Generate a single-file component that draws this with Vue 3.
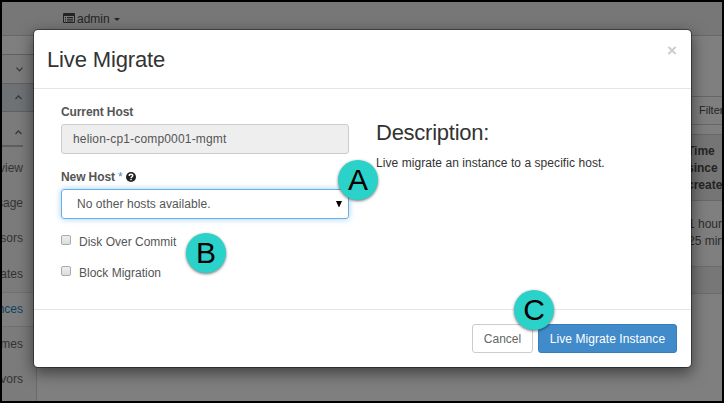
<script setup>
const links = ['Overview', 'Resource Usage', 'Hypervisors', 'Host Aggregates', 'Instances', 'Volumes', 'Flavors']
const current = 'Instances'
</script>

<template>
  <div class="frame">
    <header class="topbar">
      <svg class="list-icon" viewBox="0 0 12 10" width="12" height="10">
        <path d="M1 0h10q1 0 1 1v8q0 1-1 1H1q-1 0-1-1V1q0-1 1-1z" fill="#242424" />
        <path d="M1 3h10v6H1z" fill="#7b7b7b" />
        <path d="M2 4h1v1H2zM4 4h6v1H4zM2 5.7h1v1H2zM4 5.7h6v1H4zM2 7.4h1v1H2zM4 7.4h6v1H4z" fill="#242424" />
      </svg>
      <span class="project">admin</span>
      <span class="caret"></span>
    </header>

    <div class="page">
      <aside class="sidebar">
        <div class="side-gap"></div>
        <div class="side-group closed">
          <svg width="7" height="5" viewBox="0 0 7 5"><path d="M.5 .7 3.5 3.8 6.5 .7" /></svg>
        </div>
        <div class="side-group open">
          <svg width="7" height="5" viewBox="0 0 7 5"><path d="M.5 4 3.5 .9 6.5 4" /></svg>
        </div>
        <div class="side-group sub">
          <svg width="7" height="5" viewBox="0 0 7 5"><path d="M.5 4 3.5 .9 6.5 4" /></svg>
        </div>
        <nav>
          <a v-for="l in links" :key="l" :class="{ active: l === current }">{{ l }}</a>
        </nav>
      </aside>
      <main class="content">
        <div class="results">
          <div class="filter">Filter</div>
          <div class="th">Time<br>since<br>created</div>
          <div class="td">1 hour,<br>25 minutes</div>
          <div class="tf"></div>
        </div>
      </main>
    </div>

    <section class="modal">
      <div class="modal-header">
        <h3>Live Migrate</h3>
        <span class="close">×</span>
      </div>
      <div class="modal-body">
        <div class="form">
          <label class="field-label">Current Host</label>
          <div class="input readonly">helion-cp1-comp0001-mgmt</div>
          <label class="field-label second">New Host <span class="star">*</span>
            <svg class="help" width="10" height="10" viewBox="0 0 10 10">
              <circle cx="5" cy="5" r="5" fill="#222" />
              <path d="M3.2 3.9C3.2 1.6 6.9 1.7 6.8 3.8 6.7 4.9 5 4.9 5 6.2" fill="none" stroke="#fff" stroke-width="1.4" />
              <path d="M4.3 7h1.4v1.3H4.3z" fill="#fff" />
            </svg>
          </label>
          <div class="input select">
            <span>No other hosts available.</span>
            <svg width="6" height="6" viewBox="0 0 6 6"><path d="M0 0h6L3.3 6h-.6z" fill="#000" /></svg>
          </div>
          <div class="check first"><i></i><span>Disk Over Commit</span></div>
          <div class="check"><i></i><span>Block Migration</span></div>
        </div>
        <div class="description">
          <h3>Description:</h3>
          <p>Live migrate an instance to a specific host.</p>
        </div>
      </div>
      <div class="modal-footer">
        <button class="btn">Cancel</button>
        <button class="btn primary">Live Migrate Instance</button>
      </div>
    </section>

    <span class="badge a">A</span>
    <span class="badge b">B</span>
    <span class="badge c">C</span>
  </div>
</template>

<style>
body { margin: 0; }
</style>

<style scoped>
* { box-sizing: border-box; }
.frame {
  position: relative;
  width: 724px;
  height: 403px;
  border: 2px solid #000;
  overflow: hidden;
  background: #7f7f7f;
  font: 12px/17px "Liberation Sans", Arial, sans-serif;
  color: #242424;
  display: flex;
  flex-direction: column;
}
.topbar {
  flex: none;
  height: 34px;
  background: #777;
  border-bottom: 1px solid #676767;
  padding-left: 61px;
  display: flex;
  align-items: center;
}
.list-icon { display: block; margin-bottom: 1px; }
.project { margin: 1px 0 0 2px; }
.caret {
  margin: 2px 0 0 4px;
  border: 3px solid transparent;
  border-top-color: #242424;
  border-bottom: 0;
}
.page { flex: 1; display: flex; min-height: 0; }
.sidebar {
  flex: none;
  width: 35px;
  background: #7b7b7b;
  border-right: 1px solid #6b6b6b;
}
.side-gap { height: 19px; border-bottom: 1px solid #606060; background: #7f7f7f; }
.side-group { display: flex; align-items: center; padding-left: 13px; }
.side-group svg { fill: none; stroke: #353535; stroke-width: 1.2; }
.closed { height: 29px; border-bottom: 1px solid #606060; padding-left: 14px; }
.open { height: 28px; border-bottom: 1px solid #606060; background: #6f7275; }
.sub { height: 35px; width: 21px; border-bottom: 2px solid #5e5e5e; padding-top: 7px; }
nav { padding-top: 4px; }
nav a {
  display: flex;
  justify-content: flex-end;
  align-items: center;
  height: 35.2px;
  padding-right: 13px;
  white-space: nowrap;
  color: #333;
}
nav a.active {
  color: #10425f;
  background: #7f7f7f;
  border: solid #707070;
  border-width: 1px 0;
}
.content { flex: 1; padding: 60px 0 0 652px; min-width: 0; }
.results { width: 40px; white-space: nowrap; }
.filter {
  height: 29px;
  border: solid #666;
  border-width: 1px 0;
  font-size: 11px;
  line-height: 27px;
  padding-left: 10px;
}
.th {
  margin: 9px 0 0 -3px;
  height: 67px;
  border: solid #686868;
  border-width: 1px 0;
  background: #757575;
  padding: 8px 0 0 1px;
  font-weight: bold;
}
.td { height: 65px; margin-left: -2px; padding: 15px 0 0 1px; color: #2c2c2c; }
.tf { height: 28px; background: #777; border: solid #6c6c6c; border-width: 1px 0; }

.modal {
  position: absolute;
  left: 31px;
  top: 27px;
  width: 659px;
  height: 339px;
  border: 1px solid rgba(0, 0, 0, .4);
  border-radius: 5px;
  background: #fff;
  background-clip: padding-box;
  box-shadow: 0 5px 15px rgba(0, 0, 0, .5);
  display: flex;
  flex-direction: column;
}
.modal-header {
  height: 59px;
  flex: none;
  border-bottom: 1px solid #e5e5e5;
  padding: 17px 14px 0 13px;
  display: flex;
  justify-content: space-between;
}
h3 { margin: 0; font-size: 22px; line-height: 26px; font-weight: normal; letter-spacing: -.15px; color: #333; }
.close { font-size: 17px; font-weight: bold; line-height: 8px; color: #ccc; }
.modal-body { flex: 1; display: flex; padding: 14px 27px 0; }
.form { width: 288px; flex: none; color: #555; }
.field-label { display: block; font-weight: bold; height: 21px; line-height: 18px; letter-spacing: -.1px; }
.second { margin-top: 14px; }
.star { color: #428bca; font-weight: normal; }
.help { margin-left: 3px; vertical-align: -1px; }
.input {
  height: 30px;
  border: 1px solid #ccc;
  border-radius: 3px;
  padding: 0 11px;
  line-height: 28px;
}
.readonly { background: #eee; letter-spacing: .17px; }
.select {
  border-color: #66afe9;
  box-shadow: 0 0 6px rgba(102, 175, 233, .6);
  display: flex;
  justify-content: space-between;
  align-items: center;
  padding: 0 6px 0 15px;
  letter-spacing: .06px;
}
.check { display: flex; height: 17px; margin-top: 14px; }
.first { margin-top: 15px; }
.check i {
  width: 10px;
  height: 10px;
  margin: 1px 8px 0 0;
  border: 1px solid #aaa;
  border-radius: 2px;
  background: linear-gradient(#eee, #ddd);
}
.description { padding: 17px 0 0 27px; color: #333; }
.description h3 { letter-spacing: -.25px; }
.description p { margin: 9px 0 0; letter-spacing: .06px; }
.modal-footer {
  flex: none;
  height: 58px;
  border-top: 1px solid #e5e5e5;
  padding: 14px 14px 0;
  display: flex;
  justify-content: flex-end;
  gap: 5px;
}
.btn {
  height: 29px;
  border: 1px solid #ccc;
  border-radius: 3px;
  padding: 1px 0 0;
  background: #fff;
  color: #666;
  font: 12px/26px "Liberation Sans", Arial, sans-serif;
  white-space: nowrap;
  width: 61px;
}
.primary { width: 139px; background: #428bca; border-color: #357ebd; color: #fff; letter-spacing: .06px; }
.badge {
  position: absolute;
  width: 40px;
  height: 40px;
  border-radius: 50%;
  background: #2ad2c9;
  box-shadow: 0 1px 3px rgba(0, 0, 0, .55);
  color: #000;
  font-size: 30px;
  line-height: 39px;
  text-align: center;
}
.a { left: 336px; top: 158px; }
.b { left: 184px; top: 231px; }
.c { left: 512px; top: 288px; }
</style>
